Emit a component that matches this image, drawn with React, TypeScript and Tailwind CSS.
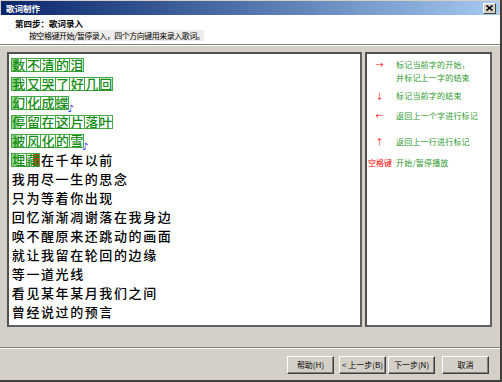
import React from "react";

const FONT = '"Noto Sans CJK SC", "Noto Sans", sans-serif';

type Line = { text: string; boxed: number; note?: boolean; red?: number };

const lines: Line[] = [
  { text: "数不清的泪", boxed: 5 },
  { text: "我又哭了好几回", boxed: 7 },
  { text: "幻化成蝶", boxed: 4, note: true },
  { text: "停留在这片落叶", boxed: 7 },
  { text: "被风化的雪", boxed: 5, note: true },
  { text: "埋藏在千年以前", boxed: 2, red: 1 },
  { text: "我用尽一生的思念", boxed: 0 },
  { text: "只为等着你出现", boxed: 0 },
  { text: "回忆渐渐凋谢落在我身边", boxed: 0 },
  { text: "唤不醒原来还跳动的画面", boxed: 0 },
  { text: "就让我留在轮回的边缘", boxed: 0 },
  { text: "等一道光线", boxed: 0 },
  { text: "看见某年某月我们之间", boxed: 0 },
  { text: "曾经说过的预言", boxed: 0 },
];

function LyricLine({ line }: { line: Line }) {
  const chars = Array.from(line.text);
  return (
    <div className="flex h-[19px] items-center">
      {chars.map((c, i) => {
        const boxed = i < line.boxed;
        const lastBoxed = i === line.boxed - 1;
        const isRed = line.red === i;
        let cls =
          "relative flex h-[14px] w-[14.6px] shrink-0 items-center justify-center text-[13px] leading-none font-medium";
        if (boxed) {
          cls += " border-y border-l border-[#44a844] text-[#138c13]";
          if (lastBoxed) cls += " border-r";
        } else {
          cls += " text-black";
        }
        if (boxed && i === 0 && !isRed) {
          cls += " bg-[linear-gradient(to_right,#8fd18f_50%,#ffffff_50%)]";
        }
        if (isRed) {
          cls += " bg-[linear-gradient(to_right,#ffffff_50%,#ff2020_50%)]";
        }
        return (
          <span key={i} className={cls}>
            {c}
            {line.note && lastBoxed && (
              <span
                className="absolute left-[calc(100%-1px)] top-[7px] text-[10px] leading-none text-[#2020ff]"
                style={{ fontFamily: '"DejaVu Sans", sans-serif' }}
              >
                ♪
              </span>
            )}
          </span>
        );
      })}
    </div>
  );
}

function Btn({ children, w }: { children: React.ReactNode; w: string }) {
  return (
    <div
      className={`${w} flex h-[18px] items-center justify-center border border-t-white border-l-white border-r-[#404040] border-b-[#404040] bg-[#d4d0c8] text-[8px] leading-none text-black shadow-[inset_-1px_-1px_0_#808080]`}
    >
      {children}
    </div>
  );
}

export default function App() {
  return (
    <div
      className="relative h-[382px] w-[502px] overflow-hidden border-r-2 border-b-2 border-r-[#404040] border-b-[#404040] bg-[#d4d0c8]"
      style={{ fontFamily: FONT }}
    >
      {/* title bar */}
      <div className="mx-[1px] mt-[1px] flex h-[14px] items-center justify-between bg-gradient-to-r from-[#0a246a] to-[#a6caf0] pl-[5px] pr-[3px]">
        <span className="text-[8.5px] font-bold leading-none text-white">歌词制作</span>
        <div className="flex h-[11px] w-[13px] items-center justify-center border border-t-white border-l-white border-r-[#404040] border-b-[#404040] bg-[#d4d0c8]">
          <svg width="7" height="6" viewBox="0 0 7 6">
            <path d="M0.5 0.5 L6.5 5.5 M6.5 0.5 L0.5 5.5" stroke="#000" strokeWidth="1.6" />
          </svg>
        </div>
      </div>

      {/* header */}
      <div className="h-[29px] bg-white pl-[15px] pt-[3px]">
        <div className="text-[8.5px] font-bold leading-[10px] text-black">第四步：歌词录入</div>
        <div className="mt-[3px] pl-[14px] text-[8px] leading-[10px]">
          <span className="bg-[#efede9] tracking-[-0.5px] text-black">
            按空格键开始/暂停录入，四个方向键用来录入歌词。
          </span>
        </div>
      </div>
      <div className="h-px bg-[#808080]" />
      <div className="h-px bg-white" />

      {/* panels */}
      <div className="mt-[6px] flex h-[275px] gap-[3px] pl-[7px]">
        <div className="w-[355px] border-2 border-t-[#505050] border-l-[#505050] border-r-[#606060] border-b-[#606060] bg-white pl-[2px] pt-px">
          {lines.map((l, i) => (
            <LyricLine key={i} line={l} />
          ))}
        </div>
        <div className="w-[127px] border-2 border-t-[#505050] border-l-[#505050] border-r-[#606060] border-b-[#606060] bg-white pt-[4px] text-[8px] leading-[13px]">
          <div className="grid grid-cols-[25px_1fr] gap-x-[4px]">
            <span className="text-center text-[#ff0000]">→</span>
            <div className="text-[#2f9a2f] tracking-[0.2px]">
              <div>标记当前字的开始，</div>
              <div>并标记上一字的结束</div>
            </div>
          </div>
          <div className="mt-[5px] grid grid-cols-[25px_1fr] gap-x-[4px]">
            <span className="text-center text-[#ff0000]">↓</span>
            <div className="text-[#2f9a2f] tracking-[0.2px]">标记当前字的结束</div>
          </div>
          <div className="mt-[7px] grid grid-cols-[25px_1fr] gap-x-[4px]">
            <span className="text-center text-[#ff0000]">←</span>
            <div className="text-[#2f9a2f] tracking-[0.2px]">返回上一个字进行标记</div>
          </div>
          <div className="mt-[13px] grid grid-cols-[25px_1fr] gap-x-[4px]">
            <span className="text-center text-[#ff0000]">↑</span>
            <div className="text-[#2f9a2f] tracking-[0.2px]">返回上一行进行标记</div>
          </div>
          <div className="mt-[8px] grid grid-cols-[25px_1fr] gap-x-[4px]">
            <span className="pl-px text-[#ff0000]">空格键</span>
            <div className="text-[#2f9a2f] tracking-[0.2px]">开始/暂停播放</div>
          </div>
        </div>
      </div>

      {/* separator */}
      <div className="mt-[20px] h-px bg-[#808080]" />
      <div className="h-px bg-white" />

      {/* buttons */}
      <div className="mt-[7px] flex justify-end pr-[11px]">
        <Btn w="w-[47px]">帮助(H)</Btn>
        <div className="w-[5px]" />
        <Btn w="w-[47px]">&lt; 上一步(B)</Btn>
        <div className="w-[2px]" />
        <Btn w="w-[47px]">下一步(N)</Btn>
        <div className="w-[7px]" />
        <Btn w="w-[47px]">取消</Btn>
      </div>
    </div>
  );
}
